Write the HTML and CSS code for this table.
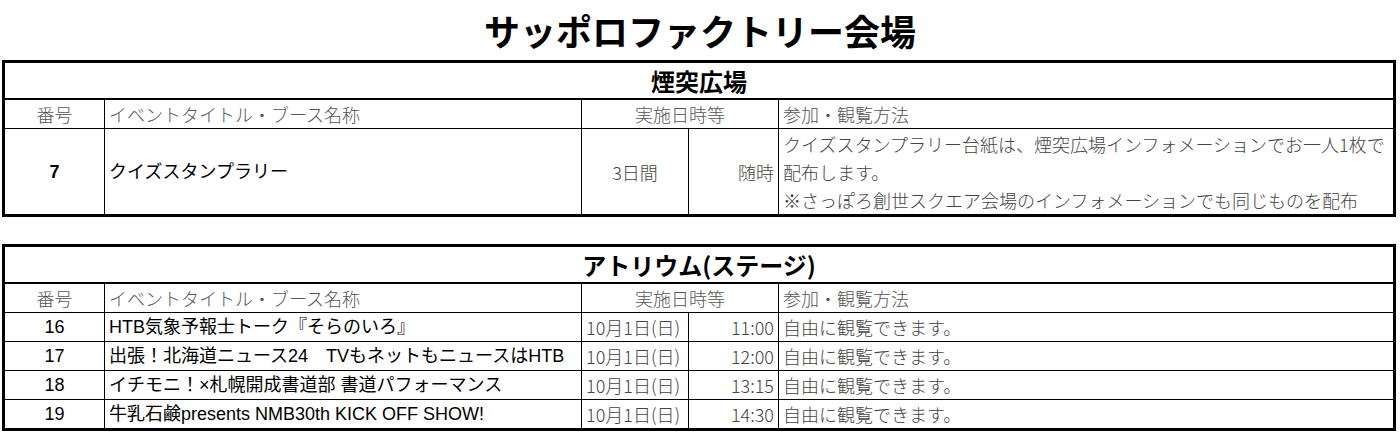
FILE: index.html
```html
<!DOCTYPE html>
<html lang="ja">
<head>
<meta charset="utf-8">
<title>サッポロファクトリー会場</title>
<link rel="stylesheet" href="styles.css">
</head>
<body>
<h1 class="page-title">サッポロファクトリー会場</h1>

<table class="venue">
  <colgroup>
    <col class="c-no"><col class="c-title"><col class="c-date"><col class="c-time"><col class="c-method">
  </colgroup>
  <tr class="area-row"><th colspan="5">煙突広場</th></tr>
  <tr class="head-row">
    <th class="center">番号</th>
    <th class="left">イベントタイトル・ブース名称</th>
    <th class="center" colspan="2">実施日時等</th>
    <th class="left last">参加・観覧方法</th>
  </tr>
  <tr class="data-row tall lastrow">
    <td class="no strong">7</td>
    <td class="title">クイズスタンプラリー</td>
    <td class="date center">3日間</td>
    <td class="time">随時</td>
    <td class="method last">クイズスタンプラリー台紙は、煙突広場インフォメーションでお一人1枚で<br>配布します。<br>※さっぽろ創世スクエア会場のインフォメーションでも同じものを配布</td>
  </tr>
</table>

<table class="venue second">
  <colgroup>
    <col class="c-no"><col class="c-title"><col class="c-date"><col class="c-time"><col class="c-method">
  </colgroup>
  <tr class="area-row"><th colspan="5">アトリウム(ステージ)</th></tr>
  <tr class="head-row">
    <th class="center">番号</th>
    <th class="left">イベントタイトル・ブース名称</th>
    <th class="center" colspan="2">実施日時等</th>
    <th class="left last">参加・観覧方法</th>
  </tr>
  <tr class="data-row">
    <td class="no">16</td>
    <td class="title">HTB気象予報士トーク『そらのいろ』</td>
    <td class="date">10月1日(日)</td>
    <td class="time">11:00</td>
    <td class="method last">自由に観覧できます。</td>
  </tr>
  <tr class="data-row">
    <td class="no">17</td>
    <td class="title">出張！北海道ニュース24　TVもネットもニュースはHTB</td>
    <td class="date">10月1日(日)</td>
    <td class="time">12:00</td>
    <td class="method last">自由に観覧できます。</td>
  </tr>
  <tr class="data-row">
    <td class="no">18</td>
    <td class="title">イチモニ！×札幌開成書道部 書道パフォーマンス</td>
    <td class="date">10月1日(日)</td>
    <td class="time">13:15</td>
    <td class="method last">自由に観覧できます。</td>
  </tr>
  <tr class="data-row lastrow">
    <td class="no">19</td>
    <td class="title">牛乳石鹸presents NMB30th KICK OFF SHOW!</td>
    <td class="date">10月1日(日)</td>
    <td class="time">14:30</td>
    <td class="method last">自由に観覧できます。</td>
  </tr>
</table>
</body>
</html>
```

FILE: styles.css
```css
html, body {
  margin: 0;
  padding: 0;
  background: #ffffff;
}

body {
  width: 1400px;
  font-family: "Noto Sans CJK JP", sans-serif;
  color: #000;
}

.page-title {
  margin: 0;
  height: 60px;
  line-height: 60px;
  text-align: center;
  font-size: 36px;
  font-weight: 700;
  font-family: "Noto Sans CJK JP", sans-serif;
  color: #000;
}

.venue {
  margin-left: 2px;
  width: 1394px;
  table-layout: fixed;
  border-collapse: separate;
  border-spacing: 0;
  border: 3px solid #000;
}

.venue.second {
  margin-top: 27px;
}

.c-no { width: 100px; }
.c-title { width: 477px; }
.c-date { width: 107px; }
.c-time { width: 90px; }
.c-method { width: 614px; }

.venue th,
.venue td {
  padding: 0 4px;
  border-right: 1px solid #000;
  border-bottom: 1px solid #000;
  white-space: nowrap;
  overflow: hidden;
  font-size: 18px;
  line-height: 28px;
  vertical-align: middle;
}

.venue .last { border-right: none; }
.venue .lastrow td { border-bottom: none; }

.area-row th {
  height: 37px;
  box-sizing: border-box;
  border-right: none;
  border-bottom: 2px solid #000;
  font-size: 24px;
  font-weight: 700;
  text-align: center;
  color: #000;
}

.head-row th {
  height: 29px;
  box-sizing: border-box;
  font-weight: 300;
  color: #555;
}

.head-row th.left { text-align: left; }
.head-row th.center { text-align: center; }

.data-row td {
  height: 29px;
  box-sizing: border-box;
}

.data-row.lastrow td { height: 28px; }
.data-row.tall td { height: 85px; }

.no {
  text-align: center;
  font-family: "Liberation Sans", "Noto Sans CJK JP", sans-serif;
  color: #000;
}

.no.strong { font-weight: 700; }

.title {
  text-align: left;
  padding-left: 5px;
  font-family: "Liberation Sans", "Noto Sans CJK JP", sans-serif;
  color: #000;
}

.date {
  text-align: left;
  padding-left: 2px;
  font-weight: 300;
  color: #444;
}

.date.center { text-align: center; }

.time {
  text-align: right;
  font-weight: 300;
  color: #444;
}

.method {
  text-align: left;
  font-weight: 300;
  color: #444;
}
```
